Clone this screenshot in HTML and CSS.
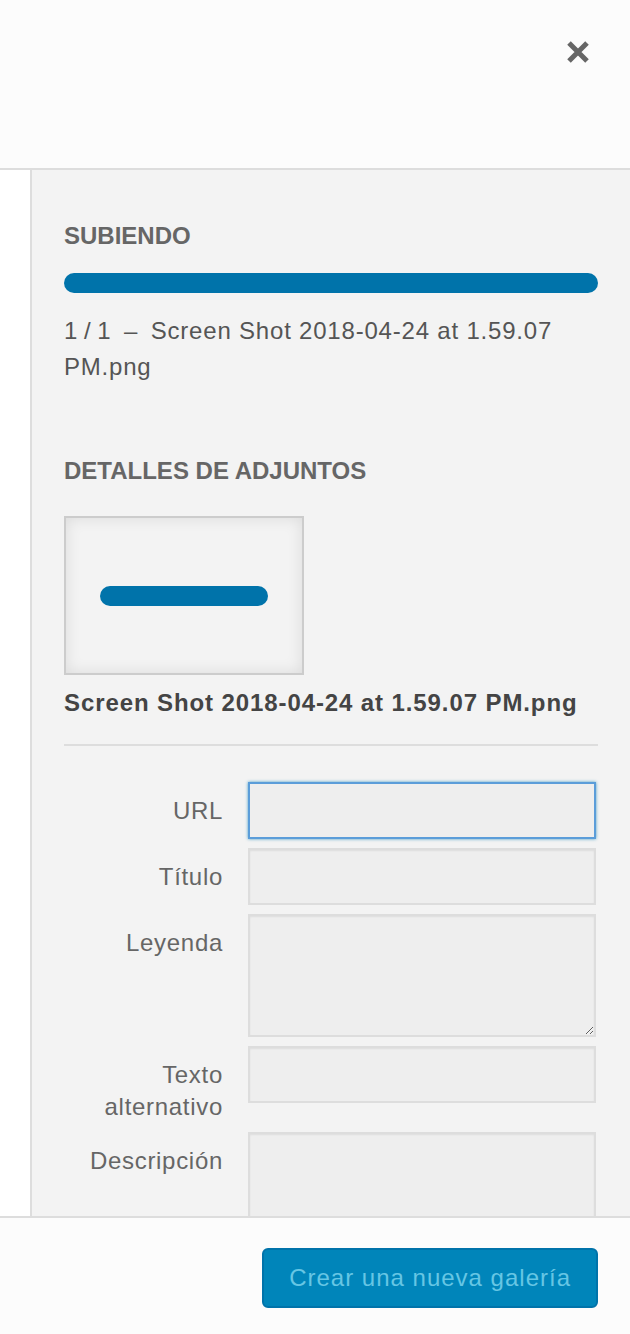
FILE: index.html
```html
<!DOCTYPE html>
<html lang="es">
<head>
<meta charset="UTF-8">
<meta name="viewport" content="width=device-width, initial-scale=1.0">
<title>Detalles de adjuntos</title>
<link rel="stylesheet" href="styles.css">
</head>
<body>

<div class="modal">
    <div class="modal-header">
        <button class="close-btn" aria-label="Cerrar">
            <svg width="24" height="24" viewBox="0 0 24 24">
                <path d="M3 3 L21 21 M21 3 L3 21" stroke="#666" stroke-width="5" stroke-linecap="butt"/>
            </svg>
        </button>
    </div>

    <div class="modal-body">
        <div class="library"></div>

        <div class="sidebar">
            <h2 class="section-title">Subiendo</h2>
            <div class="progress"><div class="progress-bar"></div></div>
            <p class="upload-info"><span class="upload-index">1 / 1 &nbsp;&ndash;&nbsp; </span>Screen Shot 2018-04-24 at 1.59.07 PM.png</p>

            <h2 class="section-title details-title">Detalles de adjuntos</h2>
            <div class="thumbnail">
                <div class="thumb-bar"></div>
            </div>
            <div class="filename">Screen Shot 2018-04-24 at 1.59.07 PM.png</div>
            <hr class="divider">

            <div class="settings">
                <label class="setting">
                    <span class="name">URL</span>
                    <input type="text" class="field focused">
                </label>
                <label class="setting">
                    <span class="name">Título</span>
                    <input type="text" class="field">
                </label>
                <label class="setting">
                    <span class="name">Leyenda</span>
                    <textarea class="field area"></textarea>
                </label>
                <label class="setting">
                    <span class="name">Texto alternativo</span>
                    <input type="text" class="field">
                </label>
                <label class="setting">
                    <span class="name">Descripción</span>
                    <textarea class="field area"></textarea>
                </label>
            </div>
        </div>
    </div>

    <div class="modal-footer">
        <button class="gallery-btn" disabled>Crear una nueva galería</button>
    </div>
</div>

</body>
</html>
```

FILE: styles.css
```css
body {
    margin: 0;
    font-family: 'Liberation Sans', Arial, sans-serif;
    background-color: #fff;
}
.modal {
    display: flex;
    flex-direction: column;
    width: 630px;
    height: 1334px;
    overflow: hidden;
}
.modal-header {
    height: 168px;
    flex-shrink: 0;
    background-color: #fcfcfc;
    border-bottom: 2px solid #ddd;
    display: flex;
    justify-content: flex-end;
    align-items: flex-start;
}
.close-btn {
    margin: 40px 40px 0 0;
    padding: 0;
    width: 24px;
    height: 24px;
    border: none;
    background: none;
    cursor: pointer;
}
.modal-body {
    flex: 1;
    display: flex;
    overflow: hidden;
}
.library {
    width: 30px;
    flex-shrink: 0;
    background-color: #fff;
    border-right: 2px solid #ddd;
}
.sidebar {
    flex: 1;
    background-color: #f3f3f3;
    padding: 50px 32px 0 32px;
}
.section-title {
    margin: 0 0 21px 0;
    font-size: 24px;
    line-height: 32px;
    font-weight: bold;
    text-transform: uppercase;
    color: #666;
}
.progress {
    height: 20px;
    border-radius: 10px;
    background-color: #ddd;
    overflow: hidden;
}
.progress-bar {
    width: 100%;
    height: 100%;
    background-color: #0073aa;
}
.upload-info {
    margin: 20px 0 0 0;
    font-size: 24px;
    line-height: 36px;
    letter-spacing: 0.8px;
    color: #555;
}
.upload-index {
    letter-spacing: 0;
}
.details-title {
    margin-top: 70px;
    margin-bottom: 29px;
}
.thumbnail {
    width: 236px;
    height: 155px;
    border: 2px solid #ccc;
    background-color: #f3f3f3;
    box-shadow: inset 0 0 15px rgba(0, 0, 0, 0.1);
    display: flex;
    align-items: center;
    justify-content: center;
}
.thumb-bar {
    width: 168px;
    height: 20px;
    border-radius: 10px;
    background-color: #0073aa;
}
.filename {
    margin-top: 12px;
    font-size: 24px;
    line-height: 32px;
    letter-spacing: 0.9px;
    font-weight: bold;
    color: #444;
    white-space: nowrap;
}
.divider {
    margin: 25px 0 36px 0;
    border: none;
    border-top: 2px solid #ddd;
}
.settings {
    display: flex;
    flex-direction: column;
    gap: 9px;
}
.setting {
    display: flex;
    align-items: flex-start;
}
.name {
    width: 159px;
    flex-shrink: 0;
    margin-right: 25px;
    padding-top: 13px;
    text-align: right;
    font-size: 24px;
    line-height: 32px;
    letter-spacing: 0.7px;
    color: #666;
}
.field {
    box-sizing: border-box;
    width: 348px;
    height: 57px;
    margin: 0;
    padding: 6px 10px;
    font-family: inherit;
    font-size: 24px;
    background-color: #eee;
    border: 2px solid #ddd;
    box-shadow: inset 0 1px 2px rgba(0, 0, 0, 0.07);
    outline: none;
}
.field.focused {
    border-color: #5b9dd9;
    box-shadow: 0 0 3px rgba(30, 140, 190, 0.8);
}
.area {
    height: 123px;
    resize: vertical;
}
.modal-footer {
    height: 86px;
    flex-shrink: 0;
    background-color: #fcfcfc;
    border-top: 2px solid #ddd;
    padding: 30px 32px 0 0;
    display: flex;
    justify-content: flex-end;
    align-items: flex-start;
}
.gallery-btn {
    height: 60px;
    padding: 0 25px;
    font-family: inherit;
    font-size: 24px;
    letter-spacing: 1px;
    color: #66c6e4;
    background-color: #0085ba;
    border: 2px solid #0073aa;
    border-radius: 6px;
}
```
